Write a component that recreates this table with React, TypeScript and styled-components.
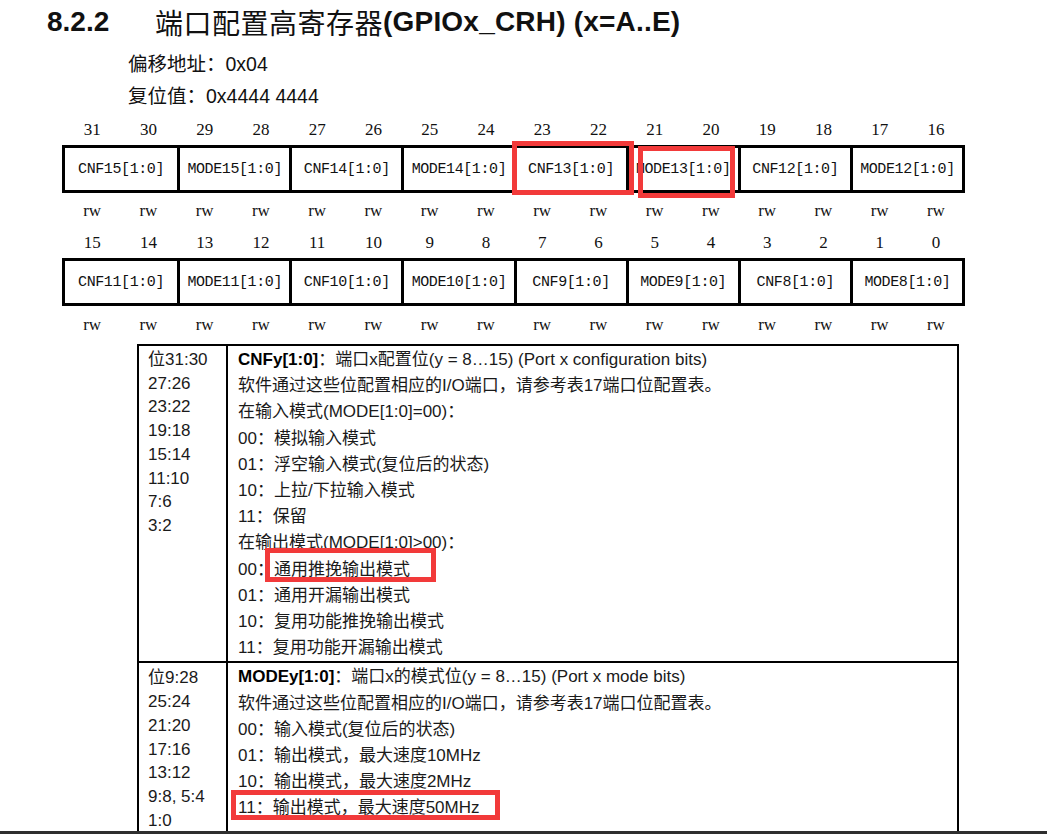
import React from "react";
import styled, { createGlobalStyle } from "styled-components";

const GlobalStyle = createGlobalStyle`
  html, body {
    margin: 0;
    padding: 0;
    background: #ffffff;
    overflow: hidden;
  }
  body {
    font-family: "Liberation Sans", "Noto Sans CJK SC", sans-serif;
    color: #111;
  }
`;

const Page = styled.div`
  position: relative;
  width: 1047px;
  height: 834px;
  overflow: hidden;
`;

const Title = styled.h2`
  margin: 0;
  display: flex;
  align-items: center;
  height: 44px;
  padding-left: 47px;
  font-size: 28px;
  line-height: 44px;
  color: #111;
  white-space: nowrap;
`;

const SectionNo = styled.span`
  font-family: "Liberation Sans", sans-serif;
  font-weight: 700;
  width: 108px;
`;

const TitleCJK = styled.span`
  font-family: "Noto Sans CJK SC", sans-serif;
  font-weight: 400;
  letter-spacing: 0.5px;
`;

const TitleLatin = styled.span`
  font-family: "Liberation Sans", sans-serif;
  font-weight: 700;
  letter-spacing: 0.2px;
`;

const Meta = styled.div`
  margin-top: 4px;
  padding-left: 128px;
  font-size: 19.5px;
  line-height: 32px;
  color: #111;
`;

const Register = styled.div`
  margin-left: 62px;
  width: 903px;
  font-family: "Liberation Serif", serif;
  color: #111;
`;

const BitRow = styled.div<{ $mt: number }>`
  display: grid;
  grid-template-columns: repeat(16, 1fr);
  padding: 0 1px 0 2px;
  margin-top: ${(p) => p.$mt}px;
  height: 20px;
  line-height: 20px;
  font-size: 17px;
  text-align: center;
`;

const FieldRow = styled.div<{ $mt: number }>`
  display: grid;
  grid-template-columns: repeat(8, 1fr);
  margin-top: ${(p) => p.$mt}px;
  height: 48px;
  box-sizing: border-box;
  border: 3px solid #000;
`;

const Field = styled.div`
  display: flex;
  align-items: center;
  justify-content: center;
  font-family: "Liberation Mono", monospace;
  font-size: 15px;
  letter-spacing: -0.4px;
  border-left: 3px solid #000;
  &:first-child {
    border-left: none;
  }
`;

const DescTable = styled.div`
  margin: 9px 0 0 137px;
  width: 822px;
  box-sizing: border-box;
  border: 2px solid #000;
  border-bottom: none;
  font-size: 17px;
  color: #1a1a1a;
`;

const DescRow = styled.div`
  display: grid;
  grid-template-columns: 89px 1fr;
  border-bottom: 2px solid #000;
`;

const BitsCell = styled.div<{ $pt: number }>`
  border-right: 2px solid #000;
  padding: ${(p) => p.$pt}px 0 0 9px;
  line-height: 23.7px;
`;

const TextCell = styled.div`
  padding: 1px 0 0 10px;
  line-height: 26.2px;
  white-space: nowrap;
`;

const Line = styled.div``;

const Strong = styled.b`
  font-weight: 700;
  color: #000;
`;

const Highlight = styled.div<{ $x: number; $y: number; $w: number; $h: number }>`
  position: absolute;
  left: ${(p) => p.$x}px;
  top: ${(p) => p.$y}px;
  width: ${(p) => p.$w}px;
  height: ${(p) => p.$h}px;
  box-sizing: border-box;
  border: 5px solid #f23a3a;
  pointer-events: none;
`;

const BottomEdge = styled.div`
  position: fixed;
  left: 0;
  right: 0;
  bottom: 0;
  height: 3px;
  background: #2e2e2e;
`;

const bitsHigh = Array.from({ length: 16 }, (_, i) => 31 - i);
const bitsLow = Array.from({ length: 16 }, (_, i) => 15 - i);
const fieldsHigh = ["CNF15", "MODE15", "CNF14", "MODE14", "CNF13", "MODE13", "CNF12", "MODE12"];
const fieldsLow = ["CNF11", "MODE11", "CNF10", "MODE10", "CNF9", "MODE9", "CNF8", "MODE8"];
const rw = Array.from({ length: 16 }, () => "rw");

const cnfBits = ["位31:30", "27:26", "23:22", "19:18", "15:14", "11:10", "7:6", "3:2"];
const modeBits = ["位9:28", "25:24", "21:20", "17:16", "13:12", "9:8, 5:4", "1:0"];

const cnfLines = [
  "软件通过这些位配置相应的I/O端口，请参考表17端口位配置表。",
  "在输入模式(MODE[1:0]=00)：",
  "00：模拟输入模式",
  "01：浮空输入模式(复位后的状态)",
  "10：上拉/下拉输入模式",
  "11：保留",
  "在输出模式(MODE[1:0]>00)：",
  "00：通用推挽输出模式",
  "01：通用开漏输出模式",
  "10：复用功能推挽输出模式",
  "11：复用功能开漏输出模式",
];

const modeLines = [
  "软件通过这些位配置相应的I/O端口，请参考表17端口位配置表。",
  "00：输入模式(复位后的状态)",
  "01：输出模式，最大速度10MHz",
  "10：输出模式，最大速度2MHz",
  "11：输出模式，最大速度50MHz",
];

export default function App() {
  return (
    <Page>
      <GlobalStyle />
      <Title>
        <SectionNo>8.2.2</SectionNo>
        <TitleCJK>端口配置高寄存器</TitleCJK>
        <TitleLatin>(GPIOx_CRH) (x=A..E)</TitleLatin>
      </Title>
      <Meta>
        <Line>偏移地址：0x04</Line>
        <Line>复位值：0x4444 4444</Line>
      </Meta>

      <Register>
        <BitRow $mt={8}>
          {bitsHigh.map((b) => (
            <span key={b}>{b}</span>
          ))}
        </BitRow>
        <FieldRow $mt={5}>
          {fieldsHigh.map((f) => (
            <Field key={f}>{f}[1:0]</Field>
          ))}
        </FieldRow>
        <BitRow $mt={8}>
          {rw.map((r, i) => (
            <span key={i}>{r}</span>
          ))}
        </BitRow>
        <BitRow $mt={12}>
          {bitsLow.map((b) => (
            <span key={b}>{b}</span>
          ))}
        </BitRow>
        <FieldRow $mt={5}>
          {fieldsLow.map((f) => (
            <Field key={f}>{f}[1:0]</Field>
          ))}
        </FieldRow>
        <BitRow $mt={9}>
          {rw.map((r, i) => (
            <span key={i}>{r}</span>
          ))}
        </BitRow>
      </Register>

      <DescTable>
        <DescRow>
          <BitsCell $pt={2}>
            {cnfBits.map((b) => (
              <Line key={b}>{b}</Line>
            ))}
          </BitsCell>
          <TextCell>
            <Line>
              <Strong>CNFy[1:0]</Strong>：端口x配置位(y = 8…15) (Port x configuration bits)
            </Line>
            {cnfLines.map((l, i) => (
              <Line key={i}>{l}</Line>
            ))}
          </TextCell>
        </DescRow>
        <DescRow>
          <BitsCell $pt={3}>
            {modeBits.map((b) => (
              <Line key={b}>{b}</Line>
            ))}
          </BitsCell>
          <TextCell>
            <Line>
              <Strong>MODEy[1:0]</Strong>：端口x的模式位(y = 8…15) (Port x mode bits)
            </Line>
            {modeLines.map((l, i) => (
              <Line key={i}>{l}</Line>
            ))}
          </TextCell>
        </DescRow>
      </DescTable>

      <Highlight $x={512} $y={141} $w={122} $h={54} />
      <Highlight $x={638} $y={146} $w={97} $h={52} />
      <Highlight $x={265} $y={548} $w={171} $h={34} />
      <Highlight $x={231} $y={790} $w={269} $h={30} />
      <BottomEdge />
    </Page>
  );
}
